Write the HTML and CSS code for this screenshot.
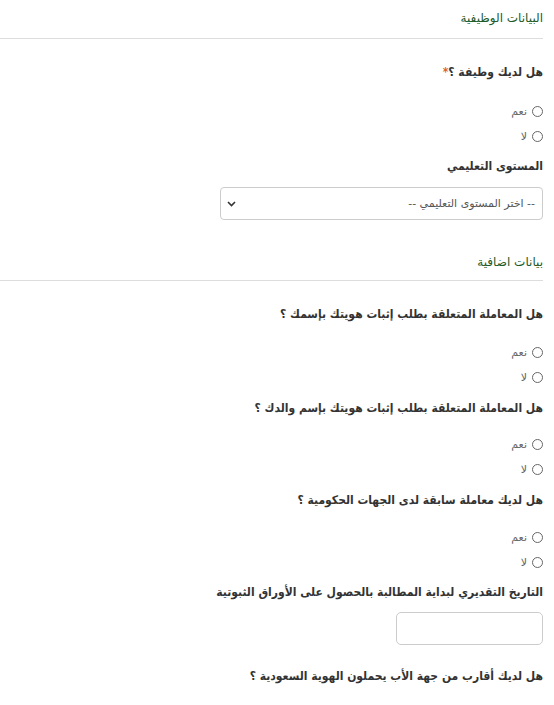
FILE: index.html
```html
<!DOCTYPE html>
<html lang="ar" dir="rtl">
<head>
<meta charset="utf-8">
<link rel="stylesheet" href="styles.css">
</head>
<body>
<div class="page">
  <section class="section">
    <h3 class="section-title">البيانات الوظيفية</h3>
    <div class="field">
      <div class="q">هل لديك وطيفة ؟<span class="req">*</span></div>
      <div class="radios r-17">
        <label class="radio"><span class="dot"></span><span class="rtext">نعم</span></label>
        <label class="radio"><span class="dot"></span><span class="rtext">لا</span></label>
      </div>
    </div>
    <div class="field near">
      <div class="q q-tight">المستوى التعليمي</div>
      <div class="select-wrap">
        <div class="select">
          <span class="placeholder">-- اختر المستوى التعليمي --</span>
          <svg class="chev" width="9" height="6" viewBox="0 0 9 6"><path d="M1 1 L4.5 4.5 L8 1" fill="none" stroke="#333" stroke-width="1.6"/></svg>
        </div>
      </div>
    </div>
  </section>
  <section class="section second">
    <h3 class="section-title">بيانات اضافية</h3>
    <div class="field">
      <div class="q">هل المعاملة المتعلقة بطلب إثبات هويتك بإسمك ؟</div>
      <div class="radios">
        <label class="radio"><span class="dot"></span><span class="rtext">نعم</span></label>
        <label class="radio"><span class="dot"></span><span class="rtext">لا</span></label>
      </div>
    </div>
    <div class="field tight-top">
      <div class="q">هل المعاملة المتعلقة بطلب إثبات هويتك بإسم والدك ؟</div>
      <div class="radios r-14">
        <label class="radio"><span class="dot"></span><span class="rtext">نعم</span></label>
        <label class="radio"><span class="dot"></span><span class="rtext">لا</span></label>
      </div>
    </div>
    <div class="field tight-top">
      <div class="q">هل لديك معاملة سابقة لدى الجهات الحكومية ؟</div>
      <div class="radios r-15">
        <label class="radio"><span class="dot"></span><span class="rtext">نعم</span></label>
        <label class="radio"><span class="dot"></span><span class="rtext">لا</span></label>
      </div>
    </div>
    <div class="field near">
      <div class="q q-tight">التاريخ التقديري لبداية المطالبة بالحصول على الأوراق الثبوتية</div>
      <div class="input"></div>
    </div>
    <div class="field last">
      <div class="q">هل لديك أقارب من جهة الأب يحملون الهوية السعودية ؟</div>
    </div>
  </section>
</div>
</body>
</html>
```
FILE: styles.css
```css
* { box-sizing: border-box; }
html, body { margin: 0; padding: 0; background: #fff; }
body {
  font-family: "DejaVu Sans", "Noto Sans", sans-serif;
  color: #333;
  width: 554px;
  overflow: hidden;
}
.page { padding: 0 11px 0 0; }
.section-title {
  margin: 0;
  padding: 8px 0 10px 0;
  font-size: 12px;
  line-height: 20px;
  font-weight: normal;
  color: #215a28;
  border-bottom: 1px solid #ddd;
}
.section { display: flex; flex-direction: column; }
.section.second { margin-top: 32px; }
.section.second .section-title { padding-top: 0; padding-bottom: 8px; }
.field { display: flex; flex-direction: column; align-items: stretch; }
.section-title + .field { margin-top: 23px; }
.field + .field { margin-top: 9px; }
.field + .field.tight-top { margin-top: 8px; }
.field + .field.near { margin-top: 7px; }
.q {
  font-family: "DejaVu Sans Condensed", "DejaVu Sans", sans-serif;
  font-size: 12px;
  font-weight: bold;
  line-height: 20px;
  color: #333;
}
.req { color: #e0632a; }
.radios { display: flex; flex-direction: column; margin-top: 16px; }
.radios.r-17 { margin-top: 17px; }
.radios.r-14 { margin-top: 14px; }
.radios.r-15 { margin-top: 15px; }
.radio {
  display: flex;
  align-items: center;
  gap: 5px;
  height: 25px;
  font-size: 11px;
  color: #666;
}
.dot {
  width: 11px;
  height: 11px;
  border: 1px solid #666;
  border-radius: 50%;
  flex: none;
}
.q-tight + .select-wrap { margin-top: 11px; }
.q-tight + .input { margin-top: 10px; }
.select-wrap { display: flex; }
.select {
  width: 323px;
  height: 33px;
  border: 1px solid #ccc;
  border-radius: 4px;
  display: flex;
  align-items: center;
  justify-content: space-between;
  padding: 0 7px 0 6px;
}
.placeholder { font-size: 11px; color: #555; }
.input {
  width: 147px;
  height: 33px;
  border: 1px solid #ccc;
  border-radius: 5px;
}
.field.last { margin-top: 21px; }
```
